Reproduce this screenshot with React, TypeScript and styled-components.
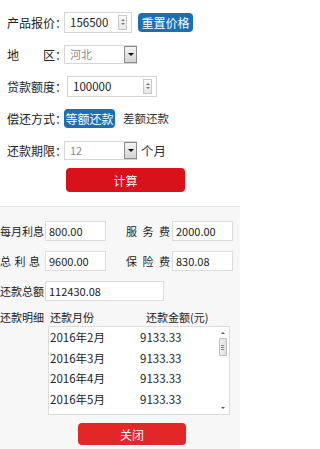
import styled, { createGlobalStyle } from "styled-components";

const GlobalStyle = createGlobalStyle`
  body {
    margin: 0;
    background: #ffffff;
    font-family: "Noto Sans CJK SC", "Liberation Sans", sans-serif;
    color: #222;
  }
`;

const Page = styled.div`
  width: 240px;
  height: 449px;
  overflow: hidden;
  display: flex;
  flex-direction: column;
`;

/* ---------- top form ---------- */

const Form = styled.div`
  display: flex;
  flex-direction: column;
  padding: 6px 0 0 7px;
`;

const FormRow = styled.div`
  display: flex;
  align-items: center;
  height: 32px;
`;

const Label = styled.span<{ $w: number; $spacing?: number }>`
  width: ${({ $w }) => $w}px;
  flex-shrink: 0;
  font-size: 12px;
  white-space: nowrap;
  letter-spacing: ${({ $spacing }) => $spacing ?? 0}px;
`;

const NumberBox = styled.div<{ $w: number }>`
  width: ${({ $w }) => $w}px;
  height: 21px;
  box-sizing: border-box;
  border: 1px solid #d6d6d6;
  background: #fff;
  display: flex;
  align-items: center;
  padding: 0 4px 0 5px;
  font-size: 11.5px;
  color: #222;
`;

const Value = styled.span`
  flex: 1;
`;

const Spinner = styled.div`
  width: 9px;
  height: 15px;
  box-sizing: border-box;
  border: 1px solid #c9c9c9;
  background: linear-gradient(#fafafa, #e6e6e6);
  display: flex;
  flex-direction: column;
  align-items: center;
  justify-content: space-around;
  padding: 2px 0;
`;

const Tri = styled.span<{ $down?: boolean }>`
  width: 0;
  height: 0;
  border-left: 2px solid transparent;
  border-right: 2px solid transparent;
  ${({ $down }) =>
    $down ? "border-top: 2px solid #777;" : "border-bottom: 2px solid #777;"}
`;

const SelectBox = styled.div`
  width: 73px;
  height: 19px;
  box-sizing: border-box;
  border: 1px solid #d6d6d6;
  border-right: none;
  background: #fff;
  display: flex;
  align-items: center;
  font-size: 11px;
  color: #8a8a8a;
  padding-left: 5px;
`;

const SelectArrow = styled.div`
  width: 13px;
  height: 17px;
  box-sizing: border-box;
  border: 1px solid #8c8c8c;
  background: linear-gradient(#f4f4f4, #d4d4d4);
  display: flex;
  align-items: center;
  justify-content: center;
  &::after {
    content: "";
    border-left: 3px solid transparent;
    border-right: 3px solid transparent;
    border-top: 3px solid #111;
  }
`;

const BlueButton = styled.span<{ $w: number }>`
  width: ${({ $w }) => $w}px;
  height: 19px;
  border-radius: 4px;
  background: #1a70b7;
  color: #fff;
  font-size: 12px;
  display: flex;
  align-items: center;
  justify-content: center;
`;

const PlainText = styled.span<{ $size: number }>`
  font-size: ${({ $size }) => $size}px;
  color: #333;
`;

const RedButton = styled.div<{ $w: number; $h: number; $bg: string }>`
  width: ${({ $w }) => $w}px;
  height: ${({ $h }) => $h}px;
  border-radius: 4px;
  background: ${({ $bg }) => $bg};
  color: #fff;
  font-size: 12px;
  display: flex;
  align-items: center;
  justify-content: center;
`;

/* ---------- result panel ---------- */

const Result = styled.div`
  flex: 1;
  margin-top: 12px;
  border-top: 1px solid #e6e6e6;
  background: #f7f7f7;
  padding-top: 9px;
  display: flex;
  flex-direction: column;
`;

const ResultRow = styled.div`
  display: flex;
  align-items: center;
  height: 30px;
`;

const SmallLabel = styled.span<{ $w: number; $spacing?: number; $ml?: number }>`
  width: ${({ $w }) => $w}px;
  margin-left: ${({ $ml }) => $ml ?? 0}px;
  flex-shrink: 0;
  font-size: 11px;
  letter-spacing: ${({ $spacing }) => $spacing ?? 0}px;
  white-space: nowrap;
  color: #222;
`;

const ResultBox = styled.div<{ $w: number }>`
  width: ${({ $w }) => $w}px;
  height: 20px;
  box-sizing: border-box;
  border: 1px solid #dcdcdc;
  background: #fff;
  display: flex;
  align-items: center;
  padding-left: 3px;
  font-size: 11px;
  color: #222;
`;

const HeadRow = styled.div`
  display: flex;
  align-items: center;
  height: 18px;
  margin-top: 2px;
  font-size: 11px;
`;

const HeadCell = styled.span<{ $w: number }>`
  width: ${({ $w }) => $w}px;
  flex-shrink: 0;
`;

const Table = styled.div`
  margin-left: 48px;
  width: 182px;
  height: 89px;
  box-sizing: border-box;
  border: 1px solid #dcdcdc;
  background: #fff;
  display: flex;
`;

const TableBody = styled.div`
  flex: 1;
  padding: 0 0 0 1px;
`;

const TableRow = styled.div`
  display: flex;
  align-items: center;
  height: 20.5px;
  font-size: 11.5px;
  color: #222;
`;

const Cell = styled.span<{ $w: number }>`
  width: ${({ $w }) => $w}px;
  flex-shrink: 0;
`;

const Scrollbar = styled.div`
  width: 11px;
  margin-right: 1px;
  display: flex;
  flex-direction: column;
  align-items: center;
  padding: 2px 0;
  box-sizing: border-box;
`;

const ScrollArrow = styled.span<{ $down?: boolean }>`
  height: 8px;
  display: flex;
  align-items: center;
  justify-content: center;
  &::after {
    content: "";
    border-left: 2px solid transparent;
    border-right: 2px solid transparent;
    ${({ $down }) =>
      $down ? "border-top: 2px solid #555;" : "border-bottom: 2px solid #555;"}
  }
`;

const Thumb = styled.div`
  width: 8px;
  height: 18px;
  margin-top: 1px;
  box-sizing: border-box;
  border: 1px solid #bdbdbd;
  border-radius: 1px;
  background: linear-gradient(90deg, #f2f2f2, #dedede);
  display: flex;
  flex-direction: column;
  align-items: center;
  justify-content: center;
  gap: 1px;
  span {
    width: 3px;
    height: 1px;
    background: #888;
  }
`;

const Spacer = styled.div`
  flex: 1;
`;

const Footer = styled.div`
  display: flex;
  padding: 8px 0 0 78px;
`;

const rows = [
  ["2016年2月", "9133.33"],
  ["2016年3月", "9133.33"],
  ["2016年4月", "9133.33"],
  ["2016年5月", "9133.33"],
];

function NumberField({ value, w }: { value: string; w: number }) {
  return (
    <NumberBox $w={w}>
      <Value>{value}</Value>
      <Spinner>
        <Tri />
        <Tri $down />
      </Spinner>
    </NumberBox>
  );
}

function Select({ value }: { value: string }) {
  return (
    <>
      <SelectBox>
        <Value>{value}</Value>
        <SelectArrow />
      </SelectBox>
    </>
  );
}

export default function App() {
  return (
    <Page>
      <GlobalStyle />
      <Form>
        <FormRow>
          <Label $w={57}>产品报价：</Label>
          <NumberField value="156500" w={68} />
          <span style={{ width: 6 }} />
          <BlueButton $w={55}>重置价格</BlueButton>
        </FormRow>
        <FormRow>
          <Label $w={57} $spacing={0}>
            地<span style={{ display: "inline-block", width: 24 }} />区：
          </Label>
          <Select value="河北" />
        </FormRow>
        <FormRow>
          <Label $w={60}>贷款额度：</Label>
          <NumberField value="100000" w={90} />
        </FormRow>
        <FormRow>
          <Label $w={57}>偿还方式：</Label>
          <BlueButton $w={51}>等额还款</BlueButton>
          <span style={{ width: 8 }} />
          <PlainText $size={11.5}>差额还款</PlainText>
        </FormRow>
        <FormRow>
          <Label $w={57}>还款期限：</Label>
          <Select value="12" />
          <span style={{ width: 4 }} />
          <PlainText $size={12.5}>个月</PlainText>
        </FormRow>
        <FormRow style={{ height: 28, paddingLeft: 59 }}>
          <RedButton $w={119} $h={24} $bg="#d8111b">
            计算
          </RedButton>
        </FormRow>
      </Form>

      <Result>
        <ResultRow>
          <SmallLabel $w={45}>每月利息</SmallLabel>
          <ResultBox $w={61}>800.00</ResultBox>
          <SmallLabel $w={46} $ml={20} $spacing={5.5}>
            服务费
          </SmallLabel>
          <ResultBox $w={61}>2000.00</ResultBox>
        </ResultRow>
        <ResultRow>
          <SmallLabel $w={45} $spacing={3.5}>
            总利息
          </SmallLabel>
          <ResultBox $w={61}>9600.00</ResultBox>
          <SmallLabel $w={46} $ml={20} $spacing={5.5}>
            保险费
          </SmallLabel>
          <ResultBox $w={61}>830.08</ResultBox>
        </ResultRow>
        <ResultRow>
          <SmallLabel $w={45}>还款总额</SmallLabel>
          <ResultBox $w={119}>112430.08</ResultBox>
        </ResultRow>
        <HeadRow>
          <HeadCell $w={50}>还款明细</HeadCell>
          <HeadCell $w={96}>还款月份</HeadCell>
          <HeadCell $w={80}>还款金额(元)</HeadCell>
        </HeadRow>
        <Table>
          <TableBody>
            {rows.map(([m, v]) => (
              <TableRow key={m}>
                <Cell $w={90}>{m}</Cell>
                <Cell $w={60}>{v}</Cell>
              </TableRow>
            ))}
          </TableBody>
          <Scrollbar>
            <ScrollArrow />
            <Thumb>
              <span />
              <span />
              <span />
            </Thumb>
            <Spacer />
            <ScrollArrow $down />
          </Scrollbar>
        </Table>
        <Footer>
          <RedButton $w={108} $h={22} $bg="#e32626">
            关闭
          </RedButton>
        </Footer>
      </Result>
    </Page>
  );
}
